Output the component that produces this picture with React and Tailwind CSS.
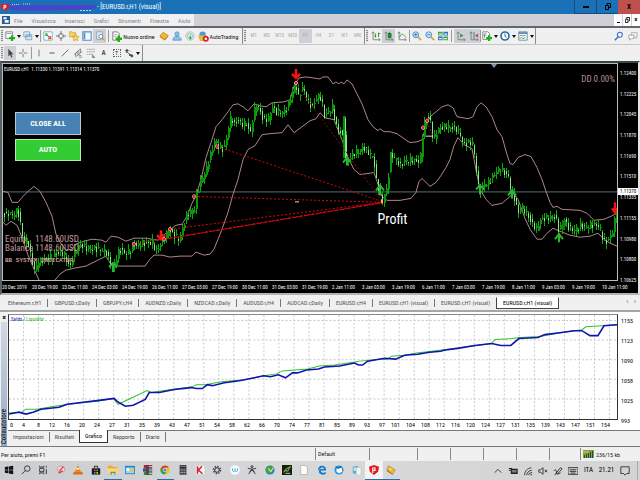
import React from "react";

const NARROW = "font-['Liberation_Sans_Narrow','Roboto_Condensed','Liberation_Sans',sans-serif]";

const menus = ["File", "Visualizza", "Inserisci", "Grafici", "Strumenti", "Finestra", "Aiuto"];
const timeframes = ["M1", "M5", "M15", "M30", "H1", "H4", "D1", "W1", "MN"];
const prices = ["1.12400", "1.12225", "1.12045", "1.11870", "1.11690", "1.11510", "1.11335", "1.11155", "1.10980", "1.10800", "1.10625"];
const times = [
  "20 Dec 2019", "20 Dec 19:00", "23 Dec 11:00", "24 Dec 03:00", "24 Dec 19:00", "26 Dec 11:00", "27 Dec 03:00",
  "27 Dec 19:00", "30 Dec 11:00", "31 Dec 03:00", "31 Dec 19:00", "2 Jan 11:00", "3 Jan 03:00", "3 Jan 19:00",
  "6 Jan 11:00", "7 Jan 03:00", "7 Jan 19:00", "8 Jan 11:00", "9 Jan 03:00", "9 Jan 19:00", "10 Jan 11:00",
];
const chartTabs = [
  "Ethereum.r,H1", "GBPUSD.r,Daily", "GBPJPY.r,H4", "AUDNZD.r,Daily", "NZDCAD.r,Daily", "AUDUSD.r,H4",
  "AUDCAD.r,Daily", "EURUSD.r,H4", "EURUSD.r,H1 (visual)", "EURUSD.r,H1 (visual)", "EURUSD.r,H1 (visual)",
];
const testerTabs = ["Impostazioni", "Risultati", "Grafico", "Rapporto", "Diario"];
const testerTicks = [
  4, 8, 12, 16, 20, 24, 27, 31, 35, 39, 43, 47, 51, 54, 58, 62, 66, 70, 74, 77, 81, 85, 89, 93, 97, 101, 104,
  108, 112, 116, 120, 124, 127, 131, 135, 139, 143, 147, 151, 154,
];

const track = [
  [3, 214], [6, 217], [9, 213], [12, 216], [15, 214], [17, 210], [19, 220], [22, 236], [24, 243], [27, 240], [30, 256],
  [33, 268], [35, 273], [37, 262], [44, 261], [52, 257], [60, 253], [64, 256], [67, 264], [70, 268], [72, 258],
  [75, 251], [79, 246], [86, 249], [95, 250], [104, 252], [107, 256], [109, 263], [112, 268], [115, 262], [119, 250],
  [124, 254], [130, 252], [133, 246], [137, 247], [141, 243], [145, 245], [152, 243], [155, 251], [158, 250],
  [161, 242], [166, 235], [169, 230], [172, 235], [178, 240], [181, 234], [184, 223], [187, 215], [194, 210],
  [196, 196], [200, 183], [205, 172], [209, 158], [213, 145], [215, 138], [217, 146], [223, 150], [226, 138],
  [229, 120], [231, 118], [234, 124], [238, 120], [242, 124], [246, 124], [250, 133], [253, 113], [256, 105],
  [259, 110], [262, 118], [265, 120], [268, 118], [272, 107], [275, 112], [285, 112], [288, 104], [290, 98],
  [293, 88], [295, 83], [298, 97], [301, 90], [303, 88], [306, 97], [309, 104], [312, 106], [315, 100], [319, 94],
  [322, 105], [324, 116], [328, 112], [332, 107], [335, 122], [338, 133], [341, 130], [343, 145], [345, 122],
  [346, 158], [348, 160], [352, 155], [356, 152], [363, 148], [368, 152], [372, 156], [374, 165], [376, 182],
  [379, 192], [382, 202], [384, 194], [386, 191], [388, 175], [390, 155], [394, 158], [397, 160], [400, 166],
  [404, 161], [412, 160], [418, 162], [420, 155], [422, 135], [424, 125], [427, 116], [430, 122], [432, 135],
  [434, 137], [437, 130], [445, 126], [453, 128], [457, 130], [460, 135], [463, 145], [469, 142], [472, 143],
  [474, 155], [476, 172], [478, 188], [480, 192], [483, 185], [488, 184], [492, 178], [497, 170], [501, 170],
  [508, 178], [510, 188], [513, 195], [516, 208], [518, 214], [521, 207], [525, 212], [530, 222], [536, 230],
  [539, 222], [547, 218], [555, 218], [558, 230], [561, 228], [564, 220], [567, 228], [574, 231], [580, 227],
  [585, 229], [590, 226], [599, 227], [602, 238], [605, 245], [608, 240], [611, 236], [614, 222], [616, 212],
];

function levelAt(x) {
  const i = track.findIndex((p) => p[0] >= x);
  if (i <= 0) return track[0][1];
  const [x0, y0] = track[i - 1];
  const [x1, y1] = track[i];
  return y0 + ((y1 - y0) * (x - x0)) / (x1 - x0);
}

const candles = [];
for (let x = 4, i = 0; x <= 616; x += 2, i++) {
  const open = levelAt(x - 2) + Math.sin(i * 5.3) * 2;
  const close = levelAt(x) + Math.sin(i * 3.7 + 1) * 3;
  const top = Math.round(Math.min(open, close));
  const bottom = Math.max(top + 1, Math.round(Math.max(open, close)));
  candles.push({
    x,
    top,
    bottom,
    high: top - Math.round(Math.abs(Math.sin(i * 2.1)) * 5),
    low: bottom + Math.round(Math.abs(Math.cos(i * 1.7)) * 5),
    down: close > open,
  });
}

const upperBand =
  "3,192 8,193 12,203 18,203 22,198 28,192 34,187 40,192 46,203 52,217 56,235 60,243 66,251 72,250 76,245 84,242 92,240 102,241 106,243 111,237 118,238 126,242 134,239 146,239 158,241 166,234 172,229 176,226 182,225 187,217 192,204 196,196 201,180 206,158 211,143 216,127 222,120 228,112 233,105 238,104 243,107 248,111 254,104 260,106 266,107 272,103 284,102 290,100 294,86 299,78 306,77 320,79 323,77 328,77 333,84 336,82 339,84 341,82 344,84 347,80 352,84 357,94 362,104 368,120 373,127 378,131 380,129 384,132 390,132 397,134 404,139 410,143 418,142 422,140 425,130 430,117 436,112 442,107 448,105 453,108 457,117 463,118 468,119 473,117 477,107 481,103 486,107 492,117 497,130 502,137 507,155 510,164 513,165 518,158 525,155 531,157 537,168 542,180 546,192 550,203 553,208 557,207 562,210 580,211 587,214 594,221 604,220 611,217 617,214";
const lowerBand =
  "55,281 60,275 66,271 75,269 86,267 94,263 106,257 110,264 118,267 145,267 150,260 154,256 162,256 170,258 180,257 192,257 196,253 204,256 210,255 214,250 218,240 222,230 228,213 233,195 238,180 243,160 248,150 255,146 262,135 270,134 282,133 288,125 294,133 302,127 310,121 316,119 320,113 325,118 334,120 342,140 348,158 354,170 360,175 368,174 374,173 377,182 382,197 387,201 400,201 411,199 416,193 419,182 422,179 430,187 436,183 441,176 446,168 450,160 454,146 458,138 464,145 472,149 475,165 480,190 486,200 492,206 502,204 510,197 513,194 518,200 525,219 530,230 537,240 542,240 547,234 553,229 560,232 570,236 580,238 590,237 598,234 604,240 610,244 617,247";

const trades = [
  "M217 147L382 202", "M194 197L382 203", "M170 230L382 203", "M162 240L382 203", "M134 245L164 239",
];
const markers = [[134, 245], [164, 240], [170, 230], [194, 197], [217, 147], [296, 83], [423, 128], [427, 121]];

function Sep() {
  return <span className="h-3 w-px shrink-0 bg-[#9a9a9a]" />;
}

function Grip() {
  return <span className="mx-px h-3 w-0.5 shrink-0 bg-[repeating-linear-gradient(#8c8c8c_0_1px,#dcdcdc_1px_2px)]" />;
}

function Caret() {
  return (
    <svg viewBox="0 0 4 3" className="h-[3px] w-1 shrink-0">
      <path d="M0 0h4L2 3z" fill="#111" />
    </svg>
  );
}

function Tool({ label, children, pressed, caret, className = "w-[13px]" }) {
  return (
    <button
      aria-label={label}
      className={`flex h-[14px] shrink-0 items-center justify-center gap-0.5 ${pressed ? "bg-[#cdd0d4]" : ""} ${className}`}
    >
      <svg viewBox="0 0 12 12" className="size-2.5 shrink-0" fill="none">
        {children}
      </svg>
      {caret && <Caret />}
    </button>
  );
}

const axes = <path d="M2.500 1v9.500H11M1 3l1.500-2L4 3M9 9l2 1.500L9 12" stroke="#777" />;
const plus = <path d="M8.500 5v7M5 8.500h7" stroke="#12b512" strokeWidth="2.600" />;
const lens = (
  <>
    <path d="M7 7l4 4" stroke="#d9a92c" strokeWidth="2.200" />
    <circle cx="4.500" cy="4.500" r="3.500" fill="#cfe8fa" stroke="#4b8fc9" strokeWidth="1.200" />
  </>
);

function MainToolbar() {
  return (
    <div className="flex h-[17px] items-center border-b border-[#c6c6c6] text-[#111]">
      <div className="flex h-full items-center border-r border-[#8a8a8a] pr-0.5">
        <Grip />
        <Tool label="Nuovo grafico" caret className="w-[18px]">
          <path d="M1 1h8v8H1z" fill="#fff" stroke="#777" />
          <path d="M2 3h6" stroke="#5f9ed1" />
          {plus}
        </Tool>
        <Tool label="Profili" caret className="w-[18px]">
          <path d="M1 1h7v6H1zM3.500 4.500h7v6h-7z" fill="#e3effa" stroke="#6a9cc9" />
          <path d="M4 6h6" stroke="#6a9cc9" />
        </Tool>
        <Sep />
        <Tool label="Market Watch">
          <path d="M1 1h10v10H1z" fill="#fff" stroke="#6fa5d4" />
          <path d="M3 3l3 3M3 6l2-3" stroke="#1eaa2c" strokeWidth="1.500" />
          <path d="M6 6l3 3M9 6v3H6" stroke="#dd5b2b" strokeWidth="1.500" />
        </Tool>
        <Tool label="Finestra dati">
          <circle cx="6" cy="6" r="3" stroke="#777" />
          <path d="M6 0v4.500M6 7.500V12M0 6h4.500M7.500 6H12" stroke="#777" strokeWidth="1.200" />
        </Tool>
        <Tool label="Navigatore">
          <path d="M0 1h4l1 1h3v5H0z" fill="#f3d06a" stroke="#c39a3a" strokeWidth=".8" />
          <path d="M8 4l1.200 2.500 2.800.3-2 2 .5 3L8 10.300 5.500 11.800 6 9 4 7l2.800-.3z" fill="#ffdd55" stroke="#ba8615" strokeWidth=".7" />
        </Tool>
        <Tool label="Terminale">
          <path d="M1 1h10v10H1z" fill="#f5faff" stroke="#4f8cc4" strokeWidth="1.300" />
          <path d="M2 2h2v8H2z" fill="#4d91cc" />
        </Tool>
        <Tool label="Collaudatore" pressed>
          <path d="M2 1h7v9H2z" fill="#e3effa" stroke="#7ba3c6" />
          <circle cx="7" cy="6.500" r="2.500" fill="#fff" stroke="#777" />
          <path d="M9 8.500l2.500 3" stroke="#d09a2a" strokeWidth="1.500" />
        </Tool>
        <span className="w-0.5" />
        <Sep />
        <button className="flex h-[14px] w-12 shrink-0 items-center justify-center gap-px whitespace-nowrap text-[6px]">
          <svg viewBox="0 0 12 12" className="size-[11px] shrink-0" fill="none">
            <path d="M2 1h5l2 2v7H2z" fill="#fff" stroke="#777" />
            <path d="M3 4h4M3 6h3" stroke="#888" strokeWidth=".7" />
            {plus}
          </svg>
          Nuovo ordine
        </button>
        <Tool label="MetaEditor">
          <path d="M1 6l4-4.500 6 4L7.500 10z" fill="#f1ba32" stroke="#a87810" strokeWidth=".8" />
          <path d="M1 6l6 4 4-4.500v1.500l-4 4.500-6-4z" fill="#c98d15" />
        </Tool>
        <Tool label="Account">
          <circle cx="6" cy="3.500" r="2.500" fill="#8cc4ef" stroke="#3b83bd" strokeWidth=".8" />
          <path d="M1 11c0-3 2-4.500 5-4.500s5 1.500 5 4.500z" fill="#8cc4ef" stroke="#3b83bd" strokeWidth=".8" />
        </Tool>
        <Tool label="Segnali">
          <circle cx="6" cy="6" r="5" stroke="#a8b8c0" />
          <circle cx="6" cy="6" r="3" stroke="#7fbf95" />
          <path d="M6 4l2 6H5z" fill="#2aa84c" />
        </Tool>
        <button className="flex h-[14px] w-11 shrink-0 items-center justify-center gap-px whitespace-nowrap text-[6px]">
          <svg viewBox="0 0 12 12" className="size-[11px] shrink-0">
            <circle cx="5" cy="4" r="3.500" fill="#4a9bd8" />
            <path d="M0 5h9l-1 6H2z" fill="#e9bb3a" />
            <circle cx="8.500" cy="8.500" r="3.300" fill="#d9261c" />
            <path d="M7.300 7.300h2.400v2.400H7.300z" fill="#fff" />
          </svg>
          AutoTrading
        </button>
      </div>
      <div className="flex h-full items-center border-r border-[#8a8a8a] text-[5px] text-[#a9a9a9]">
        <Grip />
        {timeframes.map((tf) => (
          <button key={tf} className={`h-[14px] w-[13px] ${tf === "H1" ? "bg-[#cdd0d4]" : ""}`}>
            {tf}
          </button>
        ))}
      </div>
      <div className="flex h-full items-center border-r border-[#8a8a8a]">
        <Grip />
        <Tool label="Barre">
          {axes}
          <path d="M5.500 3v5M9 2v5M4 6h1.500M9 3h2" stroke="#2d9b3a" strokeWidth="1.200" />
        </Tool>
        <Tool label="Candele" pressed>
          {axes}
          <path d="M5 3h3.500v5H5zM6.500 1v8" fill="#18a832" stroke="#12752a" />
        </Tool>
        <Tool label="Linea">
          {axes}
          <path d="M3 8c2-6 4-5 8 0" stroke="#2d9b3a" />
        </Tool>
        <span className="w-px" />
        <Sep />
        <Tool label="Ingrandisci">
          {lens}
          <path d="M2.500 4.500h4M4.500 2.500v4" stroke="#2870ad" />
        </Tool>
        <Tool label="Riduci">
          {lens}
          <path d="M2.500 4.500h4" stroke="#2870ad" />
        </Tool>
        <Tool label="Affianca">
          <path d="M0 1h5.500v4.500H0zM6.500 6.500H12V11H6.500z" fill="#3aa843" />
          <path d="M6.500 1H12v4.500H6.500zM0 6.500h5.500V11H0z" fill="#3570b8" />
          <path d="M1 3h3.500v1.500H1zM7.500 3H11v1.500H7.500zM1 8.500h3.500V10H1zM7.500 8.500H11V10H7.500z" fill="#e6f3ff" />
        </Tool>
        <span className="w-0.5" />
        <Sep />
        <span className="w-0.5" />
        <Tool label="Scorrimento" pressed>
          {axes}
          <path d="M5 3l4 2.500L5 8z" fill="#26a038" />
        </Tool>
        <Tool label="Spostamento" pressed>
          {axes}
          <path d="M6 1v9" stroke="#35699c" />
          <path d="M11 3L7 5.500 11 8z" fill="#c4513a" />
        </Tool>
        <Sep />
        <Tool label="Indicatori" caret className="w-[18px]">
          <path d="M1 1h6l2 2v7H1z" fill="#fff" stroke="#777" />
          <path d="M5 3c-2-1-2 1-2 5M2 5h3" stroke="#555" strokeWidth=".8" />
          {plus}
        </Tool>
        <Tool label="Periodi" caret className="w-[18px]">
          <circle cx="6" cy="6" r="4.800" fill="#fff" stroke="#256fae" strokeWidth="2" />
          <path d="M6 3v3.500l2 1" stroke="#444" />
        </Tool>
        <Tool label="Modelli" caret className="w-[18px]">
          <path d="M1 1h10v10H1z" fill="#fff" stroke="#4b85b8" />
          <path d="M1 2.500h10" stroke="#4b85b8" strokeWidth="2" />
          <path d="M2 6l2-1 2 1 3-1" stroke="#c04a3b" />
          <path d="M2 9l2-1 2 1 3-1" stroke="#2c9c44" />
        </Tool>
      </div>
      <div className="ml-auto flex items-center gap-[3px] pr-0.5">
        <Tool label="Cerca" className="w-[11px]">
          <circle cx="7" cy="4.500" r="3" stroke="#3a6fd0" strokeWidth="1.300" />
          <path d="M5 7l-4 4" stroke="#3a6fd0" strokeWidth="1.800" />
        </Tool>
        <Tool label="Chat" className="w-[11px]">
          <path d="M4 2h7v5h-1v2L8 7H4z" fill="#eee" stroke="#aaa" />
          <path d="M1 5h6v4H4l-2 2V9H1z" fill="#fff" stroke="#999" />
        </Tool>
      </div>
    </div>
  );
}

function DrawToolbar() {
  return (
    <div className="flex h-4 items-center">
      <div className="flex h-full items-center border-r border-[#8a8a8a] pr-px">
        <Grip />
        <Tool label="Cursore" pressed className="w-3">
          <path d="M4 1v9l2-2 1.500 3.500 1.500-.7L7.500 7.500H10z" fill="#444" />
        </Tool>
        <Tool label="Mirino">
          <path d="M6 1v4M6 7v4M1 6h4M7 6h4" stroke="#666" />
        </Tool>
        <span className="w-0.5" />
        <Sep />
        <Tool label="Linea verticale">
          <path d="M6 2v8" stroke="#666" />
        </Tool>
        <Tool label="Linea orizzontale">
          <path d="M3 6h6" stroke="#555" strokeWidth="1.200" />
        </Tool>
        <Tool label="Trendline">
          <path d="M2 10l8-8" stroke="#555" />
        </Tool>
        <Tool label="Canale">
          <path d="M1 8l8-7M3 11l8-7M3 6v4M5 4v5M7 3v5M9 1v5M7 11h4M7 9h3" stroke="#666" strokeWidth=".8" />
        </Tool>
        <Tool label="Fibonacci">
          <path d="M1 1.500h10M1 4.500h10M1 7.500h7" stroke="#999" strokeDasharray="2 .6" />
          <path d="M8 8v3.500h3M8 10h2" stroke="#666" />
        </Tool>
        <button className="h-[14px] w-[13px] text-[7px] font-bold leading-none text-[#555]">A</button>
        <button className="flex h-[14px] w-[13px] items-center justify-center">
          <span className="size-2 border border-dotted border-[#666] text-center text-[6px] leading-[6px] text-[#333]">T</span>
        </button>
        <Tool label="Frecce" caret className="w-[18px]">
          <path d="M1 4l2.500-3L6 4H4.200v2H2.800V4zM6 6.500l3 1.500v-1l2.500 2.500L9 12v-1.500L6 9z" fill="#444" />
          <path d="M4 5l4 4M7 3l1 1" stroke="#444" />
        </Tool>
      </div>
    </div>
  );
}

function PriceChart() {
  return (
    <section className="relative flex min-h-0 flex-1 flex-col border-y-2 border-l-2 border-r-2 border-b-[#aeb3b5] border-l-[#596367] border-r-[#e4e4e4] border-t-[#3b4648] bg-black text-white">
      <div className="flex min-h-0 flex-1">
        <div className="relative min-w-0 flex-1 border border-[#b9bdb9]">
          <svg viewBox="3 64 614 217" preserveAspectRatio="none" className="absolute inset-0 size-full">
            <path d="M3 192.500H617" stroke="#586b7d" />
            <path d="M491 64h6l-3 4z" fill="#7d93ad" />
            <g fill="none" stroke="#b0868a">
              <polyline points={upperBand} />
              <polyline points="3,223 6,226 11,222 17,226 22,238 28,256 34,270 39,281" />
              <polyline points={lowerBand} />
            </g>
            <g shapeRendering="crispEdges">
              {candles.map((c) => (
                <g key={c.x}>
                  <rect x={c.x} y={c.high} width="1" height={c.low - c.high} fill="#08a808" />
                  <rect
                    x={c.x}
                    y={c.top}
                    width={c.down ? 1 : 2}
                    height={c.bottom - c.top}
                    fill={c.down ? "#8ae88a" : "#0a960a"}
                  />
                </g>
              ))}
              <rect x="343" y="116" width="3" height="42" fill="#0b8b0b" />
              <rect x="345" y="118" width="1" height="40" fill="#7be87b" />
              <rect x="562" y="221" width="3" height="10" fill="#0b7b0b" />
            </g>
            <g fill="none" stroke="#d40909" strokeDasharray="2 2">
              {trades.map((d) => (
                <path key={d} d={d} />
              ))}
              <path d="M162 240.500L382 203.500" strokeDasharray="5 1" />
              <path d="M296 84L372 188L382 202" stroke="#8c1010" />
              <path d="M427 122L433 137" stroke="#8c1010" />
            </g>
            <g fill="none" stroke="#28b834" strokeWidth="2">
              <path d="M113 273v-8M109 268l4-4 4 4M347 166v-8M343 163l4-5 4 5M380 196v-8M376 191l4-5 4 5M480 195v-8M476 190l4-4 4 4M512 199v-8M508 196l4-5 4 5M559 243v-9M555 240l4-5 4 5" />
            </g>
            <g fill="none" stroke="#f41212" strokeWidth="2.500">
              <path d="M296 69v8M292 74l4 4 4-4M161 231v8M157 236l4 4 4-4M615 203v9M612 209l3 4 3-4" />
            </g>
            {markers.map(([x, y]) => (
              <g key={x}>
                <path d={`M${x - 2} ${y}h4M${x} ${y - 2}v4`} stroke="#f3dcdc" strokeWidth="2" />
                <circle cx={x} cy={y} r="1.500" fill="#e81515" />
              </g>
            ))}
            <path d="M382 200v4" stroke="#f2b45c" strokeWidth="2" />
            <path d="M295 202.500h4M426 136.500h7" stroke="#ddd" />
          </svg>
          <p className={`absolute left-px top-0.5 text-[5px] leading-[6px] ${NARROW}`}>EURUSD.r,H1&nbsp; 1.11330 1.11391 1.11314 1.11370</p>
          <div className="absolute left-3 top-12 flex w-[66px] flex-col gap-1 text-[8px] font-bold text-white">
            <button className="h-[23px] border border-[#b9c7d4] bg-[#4682b4] leading-none">CLOSE ALL</button>
            <button className="h-[22px] border border-[#bde8bd] bg-[#32cd32] leading-none">AUTO</button>
          </div>
          <p className={`absolute right-0.5 top-2.5 text-[9px] leading-[10px] text-[#b98d91] ${NARROW}`}>DD 0.00%</p>
          <div className="absolute bottom-4 left-0.5 text-[#c49a9e]">
            <dl className={`grid grid-cols-[30px_auto] text-[9px] leading-[9px] ${NARROW}`}>
              <dt>Equity</dt>
              <dd>1148.60USD</dd>
              <dt>Balance</dt>
              <dd>1148.60USD</dd>
            </dl>
            <p className="mt-1 font-['Liberation_Mono',monospace] text-[6px] font-bold leading-[7px]">BB SYSTEM INDICATOR</p>
          </div>
          <p className={`absolute left-[61%] top-[68%] text-[14px] leading-4 ${NARROW}`}>Profit</p>
        </div>
        <div className={`relative -mt-px -mb-0.5 flex w-5 shrink-0 flex-col justify-between pl-0.5 pt-2 text-[5px] leading-[6px] ${NARROW}`}>
          {prices.map((p) => (
            <span key={p}>{p}</span>
          ))}
          <span className="absolute left-0 top-[57%] bg-white px-0.5 leading-[7px] text-black">1.11370</span>
        </div>
      </div>
      <div className={`grid h-3 grid-cols-21 overflow-hidden whitespace-nowrap pr-1.5 pt-0.5 text-[5px] leading-[8px] ${NARROW}`}>
        {times.map((t) => (
          <span key={t}>{t}</span>
        ))}
      </div>
    </section>
  );
}

function Tester() {
  return (
    <section className="flex h-[136px] shrink-0 border-t-2 border-[#a6a6a6] bg-[#f0f0f0]">
      <div className="flex w-2 shrink-0 flex-col items-center bg-[#f0f0f0]">
        <button aria-label="Chiudi" className="h-2.5 text-[8px] font-bold leading-[7px]">×</button>
        <div className="flex w-1.5 flex-1 items-start bg-linear-to-b from-[#d2d9e2] to-[#93aac5]">
          <span className="mt-auto mb-0.5 rotate-180 text-[7px] leading-[6px] [writing-mode:vertical-rl]">Collaudatore</span>
        </div>
      </div>
      <div className="flex min-w-0 flex-1 flex-col">
        <div className="flex min-h-0 flex-1 flex-col bg-white pt-0.5 text-black">
          <div className="flex min-h-0 flex-1">
            <div className="relative min-w-0 flex-1 border border-[#333] border-t-[#888]">
              <svg viewBox="10 314 607 106" preserveAspectRatio="none" className="absolute inset-0 size-full" fill="none">
                <g stroke="#c9c9c9" strokeDasharray="2 2">
                  {testerTicks.map((t, i) => (
                    <path key={t} d={`M${24.5 + i * 15} 314V420`} />
                  ))}
                  {[319.5, 339.5, 359.5, 379.5, 399.5].map((y) => (
                    <path key={y} d={`M10 ${y}H617`} />
                  ))}
                </g>
                <polyline
                  stroke="#2fc02f"
                  points="10,414 23,413 27,410 38,410 55,407 70,405 98,402 114,399 119,405 148,391 152,393 172,390 193,387 197,385 206,385 222,382 245,380 265,376 277,374 283,371 295,370 308,369 316,367 320,366 335,365 355,362 360,361 380,359 388,359 392,356 405,355 415,353 440,350 492,343 495,339 512,338 520,337 540,336 560,332 582,329 586,326 602,325 617,324"
                />
                <polyline
                  stroke="#1212b0"
                  strokeWidth="1.600"
                  points="10,415 20,413 27,415 34,413 42,410 60,408 68,405 84,403 100,401 115,399 118,402 126,407 134,406 146,400 150,393 160,393 175,390 192,388 197,389 203,389 208,385 213,386 225,383 240,381 255,378 264,376 271,377 279,375 286,378 293,373 298,373 307,370 319,369 325,367 340,366 355,363 359,365 363,365 368,361 385,358 396,359 405,355 418,354 430,352 441,351 444,350 458,348 475,345 492,343 501,345 511,345 519,338 538,337 545,334 560,332 574,330 582,330 590,335 598,335 604,325 617,324"
                />
              </svg>
              <p className={`absolute left-0.5 top-0.5 text-[5px] leading-[5px] ${NARROW}`}>
                <span className="text-[#1212b0]">Saldo</span> / <span className="text-[#22b422]">Liquidita'</span>
              </p>
            </div>
            <div className={`-mb-1 flex w-[22px] shrink-0 flex-col justify-between pl-[3px] pt-1 text-[6px] leading-[6px] ${NARROW}`}>
              <span>1155</span>
              <span>1123</span>
              <span>1090</span>
              <span>1058</span>
              <span>1025</span>
              <span>993</span>
            </div>
          </div>
          <div className={`ml-0.5 mr-[30px] grid h-2.5 grid-cols-40 text-[6px] leading-[9px] ${NARROW}`}>
            {testerTicks.map((t, i) => (
              <span key={t} className="flex justify-end">
                {i === 0 && <span className="mr-auto">0</span>}
                {t}
              </span>
            ))}
          </div>
        </div>
        <div className="flex h-[13px] shrink-0 border-t border-[#777] text-[6px] text-[#444]">
          {testerTabs.map((t, i) => (
            <button
              key={t}
              className={`my-px px-[5px] leading-[10px] ${t === "Grafico" ? "-mt-px mb-0 border border-t-0 border-[#333] bg-white text-black" : i === 1 ? "" : "border-r border-[#777]"}`}
            >
              {t}
            </button>
          ))}
        </div>
        <div className="h-[3px] shrink-0" />
      </div>
    </section>
  );
}

function StatusBar() {
  return (
    <footer className="flex h-[15px] shrink-0 items-center border-t border-[#6d7a78] bg-[#f0f0f0] text-[6px] text-[#222]">
      <span className="flex-1 pl-px">Per aiuto, premi F1</span>
      <span className="h-3 w-[54px] border-l border-[#888] pl-0.5 leading-[12px]">Default</span>
      <span className="h-3 w-12 border-l border-[#888]" />
      <span className="h-3 w-[33px] border-l border-[#888]" />
      <span className="h-3 w-[33px] border-l border-[#888]" />
      <span className="h-3 w-[33px] border-l border-[#888]" />
      <span className="h-3 w-[33px] border-l border-[#888]" />
      <span className="h-3 w-[31px] border-l border-[#888]" />
      <span className="flex h-3 w-[60px] items-center gap-0.5 border-l border-[#888] pl-0.5">
        <svg viewBox="0 0 11 8" className="h-2 w-[11px]">
          <path d="M0 0h11v8H0z" fill="#8a9c2c" />
          <path d="M1 8V5h1v3zM3 8V4h1v4zM5 8V3h1v5zM7 8V2h1v6zM9 8V1h1v7z" fill="#164f6b" />
          <path d="M0 2h6" stroke="#dce8a8" strokeWidth=".7" />
        </svg>
        236/15 kb
      </span>
    </footer>
  );
}

const apps = [
  ["Start", <path d="M1 2.500l4-.6v3.700H1zM5.700 1.800L11 1v4.600H5.700zM1 6.300h4V10l-4-.6zM5.700 6.300H11V11l-5.300-.8z" fill="#111" />],
  ["Cerca", <path d="M7.500 1a3.300 3.300 0 1 1 0 6.600 3.300 3.300 0 0 1 0-6.600M5 6.800L1 11" stroke="#222" fill="none" />],
  ["Attività", <path d="M2 4h5v4H2zM2 1v1.500h5V1M2 11V9.500h5V11M10 1v2M10 5v6" stroke="#222" fill="none" />],
  ["Cattura", <g fill="none"><ellipse cx="6" cy="5" rx="4.500" ry="3.500" fill="#f0dcdc" stroke="#d99" strokeWidth="1.300" /><path d="M4 7l5-5M3 10l5-3" stroke="#cf3340" strokeWidth="1.500" /></g>],
  ["VLC", <g><path d="M6 0l3.500 8h-7z" fill="#ef7d1a" /><path d="M4.700 3.500h2.600l.7 1.800H4z" fill="#fff" /><path d="M1 8h10l1 3.500H0z" fill="#e36c12" /></g>],
  ["Store", <g><path d="M1 4h10v7.500H1z" fill="#151515" /><path d="M4 4V1.500h4V4" stroke="#151515" fill="none" /><path d="M3.500 5.500h2v2h-2z" fill="#e44" /><path d="M6.500 5.500h2v2h-2z" fill="#4b4" /><path d="M3.500 8.500h2v2h-2z" fill="#49d" /><path d="M6.500 8.500h2v2h-2z" fill="#fc3" /></g>],
  ["Esplora file", <g><path d="M0 1h5l1 1.500h5V11H0z" fill="#e8a92f" /><path d="M0 4h12v7H0z" fill="#ffd868" /><path d="M3 8h6v3.500H7.500v-2h-3v2H3z" fill="#3694db" /></g>],
  ["Pannello", <g><path d="M0 1h12v10H0z" fill="#2387cc" /><path d="M1 3h10v7H1z" fill="#9ad7f5" /><path d="M2 4h3v3H2z" fill="#fff" /><path d="M6 4h4v2H6zM6 7h4v2H6z" fill="#f0c24a" /></g>],
  ["WinRAR", <g><path d="M1 0h10v4H1z" fill="#a22a54" /><path d="M0 4h11v4H0z" fill="#3a4fa0" /><path d="M1 8h10v4H1z" fill="#2f8846" /><path d="M4 0h3v12H4z" fill="#6e3a1a" /><path d="M7 2h4M7 6h4M7 10h4" stroke="#eee" /></g>],
  ["Chrome", <g><circle cx="6" cy="6" r="5.500" fill="#f2c21a" /><path d="M1.200 3.300A5.500 5.500 0 0 1 10.800 3.300H6L4 7z" fill="#dd4335" /><path d="M1.200 3.300A5.500 5.500 0 0 0 5.500 11.500L8 7.500 4 7z" fill="#2da14c" /><circle cx="6" cy="6" r="2.500" fill="#fff" /><circle cx="6" cy="6" r="1.900" fill="#3c80ee" /></g>],
  ["Calcolatrice", <g><path d="M2 0h8v12H2z" fill="#2b2b2b" /><path d="M3 1.500h6M3 5h6M3 7h6M3 9h6M3 11h6" stroke="#ddd" strokeDasharray="1.500 .7" /></g>],
  ["K", <g><path d="M1 1h10v10H1z" fill="#fff" /><path d="M3 1.500v9M8.500 1.500L4 6l5 4.500" stroke="#d6232d" strokeWidth="2" fill="none" /></g>],
  ["Impostazioni", <g fill="none" stroke="#222"><circle cx="6" cy="6" r="2.800" strokeWidth="1.200" /><circle cx="6" cy="6" r="4.300" strokeDasharray="1.500 1.870" strokeWidth="1.500" /></g>],
  ["W", <g><circle cx="6" cy="6" r="5.800" fill="#f6fbff" /><path d="M3 4v3l1.500 1L6 7V4M6 7l1.500 1L9 7V4" stroke="#36a6dc" fill="none" /></g>],
  ["Trader", <g fill="none" stroke="#222"><circle cx="6" cy="2" r="1.200" /><path d="M1 4l5 1 5-1M6 5L2 11M6 5l4 6M3 8l3-2 3 2" /></g>],
  ["IDM", <g><circle cx="6" cy="6" r="5.500" fill="#2b83c4" /><path d="M1 4l4-3 5 2-3 4-4 4-2-4z" fill="#37a846" /><path d="M4 4l3 4 3-5" stroke="#f6e251" strokeWidth="1.300" fill="none" /></g>],
  ["Grafica", <g><path d="M0 0h12v12H0z" fill="#161b16" /><path d="M2 9c2-5 5-6 8-7L7 7H4" stroke="#75a939" strokeWidth="1.300" fill="none" /><path d="M4 10h6" stroke="#ddd" /></g>],
  ["Documento", <path d="M2 .5h5.500L10 3v8.500H2z" fill="#fff" stroke="#999" strokeWidth=".7" />],
  ["Edge", <path d="M1 6.500C1 3 3 1 6 1s5 2 5 5.500H4.500c0 3 3.500 3.500 6 2v2C6.500 13 1 11 2.500 6 3 4.500 4.500 4 4.500 4.700h3.800C8 1.800 4 2.500 1 6.500z" fill="#1479d1" />],
  ["Posta", <g><circle cx="6" cy="6" r="5.500" fill="#2795e1" /><path d="M3 4l6-1 1 5-4 2-3-2z" fill="#fff" /><path d="M2 2l3 2 4-2" stroke="#136bb3" fill="none" strokeWidth="1.500" /></g>],
  ["Note", <g><path d="M1 2l6-1v10l-6-1z" fill="#62a9d6" /><path d="M5 3h6v9H5z" fill="#f2f5f6" stroke="#aaa" strokeWidth=".6" /><path d="M2 3h3v4H2z" fill="#c8e6f7" /></g>],
  ["MetaTrader", <g><path d="M0 2l6-2 6 2-1 6-5 4-5-4z" fill="#dc1d26" /><path d="M4.500 9.500V3.500h2.700v3H5" stroke="#fff" strokeWidth="1.300" fill="none" /></g>],
  ["MetaEditor", <g><path d="M3 1l8 5-3 5-7-5z" fill="#f0b832" stroke="#99701a" strokeWidth=".6" /><path d="M1 6l7 5v1L1 7.500z" fill="#9c6a12" /><path d="M4 4l3 2" stroke="#fff" /></g>],
];

const tray = [
  ["Mostra icone", <path d="M2 8l4-4 4 4" />],
  ["Batteria", <path d="M4 4h7v5H4zM1 3h4M1 5h3M4 6h7M4 8h7" strokeWidth="1.300" />],
  ["Wi-Fi", <path d="M2 11c0-5 3-8 8-9M4.500 11c0-3 2-5 6-6M7 11c0-2 1-3 4-3M9 10.500h2" />],
  ["Volume", <path d="M1 4.500h2L6 2v8L3 7.500H1zM8 4.500l3 3M11 4.500l-3 3" />],
  ["Penna", <path d="M2 11l7-9 2 1.500L5 10M1 6c2-3 4 0 3 2s3 2 5 0" />],
  ["Tastiera", <path d="M0 2h12v8H0zM2 4.500h8M2 6.500h8M3 8.500h6" />],
];

function Taskbar() {
  return (
    <nav className="flex h-[19px] shrink-0 items-center bg-linear-to-r from-[#cbcdd0] via-[#d8d8d9] to-[#d4d4d4]">
      <div className="flex h-full w-[62.5%]">
        {apps.map(([name, icon]) => (
          <button
            key={name}
            aria-label={name}
            className={`flex flex-1 items-center justify-center border-b ${
              ["Esplora file", "Chrome", "MetaEditor"].includes(name)
                ? "border-[#1b6fb9]"
                : name === "MetaTrader"
                  ? "border-[#1b6fb9] bg-[#f3f3f3]"
                  : "border-transparent"
            }`}
          >
            <svg viewBox="0 0 12 12" className="size-2.5">
              {icon}
            </svg>
          </button>
        ))}
      </div>
      <div className="ml-auto flex h-full items-center">
        {tray.map(([name, icon]) => (
          <button key={name} aria-label={name} className="flex w-[15px] justify-center">
            <svg viewBox="0 0 12 12" className="size-2.5" fill="none" stroke="#222">
              {icon}
            </svg>
          </button>
        ))}
        <span className="w-[17px] text-center text-[7px]">ITA</span>
        <span className="w-[19px] text-center text-[7px]">21.21</span>
        <button aria-label="Notifiche" className="flex w-[17px] justify-center">
          <svg viewBox="0 0 12 12" className="size-2.5" fill="none" stroke="#222">
            <path d="M1 1h10v8H8l-2 2-2-2H1z" />
          </svg>
        </button>
        <span className="ml-1 h-full w-[3px] border-l border-[#aaa]" />
      </div>
    </nav>
  );
}

export default function App() {
  return (
    <div className="flex h-screen w-full flex-col overflow-hidden bg-[#f0f0f0] font-['Liberation_Sans_Narrow','Roboto_Condensed','Liberation_Sans',sans-serif]">
      <header className="flex h-[14px] shrink-0 items-center bg-[#1a71b7] text-[7px] text-white">
        <svg viewBox="0 0 12 12" className="ml-px size-2">
          <path d="M0 1h12v7l-6 4-6-4z" fill="#dc1d26" />
          <path d="M4.500 9.500V3.500h2.700v3H5" stroke="#fff" strokeWidth="1.500" fill="none" />
        </svg>
        <svg viewBox="0 0 88 9" className="h-[9px] w-[88px]">
          <path d="M3 1.500h8M14 1h8" stroke="#b7d2ec" strokeDasharray="1 1" />
          <path d="M0 3c10-1 30-1 60-1 12 0 20 0 26 0l1 3c-8 2-20 2-30 2-20 1-40 1-56 0z" fill="#4746c9" />
          <path d="M71 7.500h12" stroke="#b7d2ec" strokeDasharray="2 1" />
        </svg>
        <h1>- [EURUSD.r,H1 (visual)]</h1>
        <div className="ml-auto flex h-full text-black">
          <button aria-label="Riduci a icona" className="flex w-[22px] items-center justify-center border-b border-l border-[#114d80]">
            <span className="h-0.5 w-1.5 bg-black" />
          </button>
          <button aria-label="Ripristina" className="flex w-[22px] items-center justify-center border-b border-l border-[#114d80]">
            <svg viewBox="0 0 6 7" className="h-[7px] w-1.5" fill="none" stroke="#000">
              <path d="M.5 2.500h3v4h-3zM2 2V.5h3.500v4H4" />
            </svg>
          </button>
          <button aria-label="Chiudi" className="w-[22px] bg-[#c0504d] text-[7px] font-bold leading-[14px]">X</button>
        </div>
      </header>

      <nav className="flex h-3 shrink-0 items-center bg-[#cfcfd5] text-[6px] text-[#7b8992]">
        <div className="flex h-full items-center gap-[9px] bg-[#f0f0f0] pr-1">
          <svg viewBox="0 0 12 12" className="-mr-[5px] ml-0.5 size-2" fill="none">
            <path d="M0 0h12v12H0z" fill="#275a91" />
            <path d="M2 2h5v3H2zM4 6h6v4H4z" fill="#eef6ff" />
          </svg>
          {menus.map((m) => (
            <button key={m}>{m}</button>
          ))}
        </div>
        <div className="ml-auto flex h-full gap-px text-[7px] font-bold leading-none text-black">
          <button aria-label="Riduci grafico" className="flex w-2 items-end justify-center bg-white pb-[3px]">
            <span className="h-px w-[3px] bg-black" />
          </button>
          <button aria-label="Ripristina grafico" className="flex w-2 items-center justify-center bg-white">
            <svg viewBox="0 0 6 7" className="h-1.5 w-[5px]" fill="none" stroke="#000">
              <path d="M.5 2.500h3v4h-3zM2 2V.5h3.500v4H4" />
            </svg>
          </button>
          <button aria-label="Chiudi grafico" className="w-2 bg-white">×</button>
        </div>
      </nav>

      <div className="shrink-0 border-t-2 border-[#62676c]">
        <MainToolbar />
        <DrawToolbar />
      </div>

      <PriceChart />

      <div className="flex h-[15px] shrink-0 items-center pl-0.5 text-[6px] text-[#555]">
        {chartTabs.map((t, i) => (
          <button
            key={i}
            className={
              i === 10
                ? "h-3 border border-[#444] border-t-transparent bg-white px-1.5 leading-none text-black"
                : `h-2 px-1.5 leading-[8px] ${i < 9 ? "border-r border-[#777]" : ""}`
            }
          >
            {t}
          </button>
        ))}
        <div className="ml-auto flex gap-1.5 pr-1 text-[7px]">
          <button aria-label="Indietro">‹</button>
          <button aria-label="Avanti">›</button>
        </div>
      </div>

      <Tester />
      <StatusBar />
      <Taskbar />
    </div>
  );
}
